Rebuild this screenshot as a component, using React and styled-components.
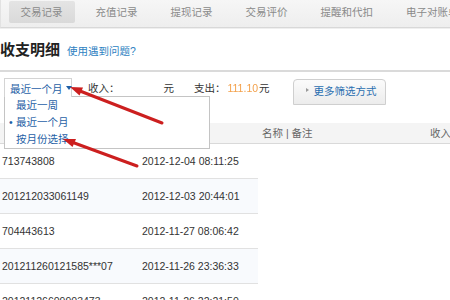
import React from "react";
import styled, { createGlobalStyle } from "styled-components";

const Global = createGlobalStyle`
  html, body { margin: 0; padding: 0; background: #fff; }
  body { width: 450px; height: 300px; overflow: hidden; }
  * { box-sizing: border-box; }
`;

const FONT = `"Liberation Sans", "Noto Sans CJK SC", sans-serif`;

const Page = styled.div`
  position: relative;
  width: 450px;
  height: 300px;
  overflow: hidden;
  font-family: ${FONT};
  background: #fff;
`;

const TabBar = styled.div`
  display: flex;
  align-items: flex-start;
  height: 28px;
  padding: 1px 0 0 3px;
  background: linear-gradient(#f6f6f6, #eeeeee);
  border-left: 1px solid #e2e2e2;
  border-bottom: 1px solid #d8d8d8;
  box-shadow: 0 1px 0 #efefef;
  white-space: nowrap;
  overflow: hidden;
`;

const Tab = styled.div`
  flex: none;
  height: 22px;
  margin: 0 4.5px;
  padding: 0 12px;
  line-height: 22px;
  font-size: 10.5px;
  color: #8a8a8a;
  border-radius: 2px;
  background: ${(p) => (p.$active ? "linear-gradient(#e4e4e4, #d9d9d9)" : "transparent")};
`;

const TitleRow = styled.div`
  display: flex;
  align-items: baseline;
  gap: 7px;
  height: 42px;
  padding-top: 10px;
`;

const Title = styled.div`
  font-size: 15px;
  font-weight: bold;
  color: #222;
`;

const HelpLink = styled.a`
  font-size: 10.5px;
  color: #2d7fc1;
  text-decoration: none;
`;

const FilterBar = styled.div`
  display: flex;
  align-items: flex-start;
  border-top: 2px solid #dadada;
  padding: 6px 0 20px 4px;
  height: 53px;
  white-space: nowrap;
`;

const DropWrap = styled.div`
  position: relative;
  flex: none;
  z-index: 5;
`;

const Trigger = styled.div`
  position: relative;
  z-index: 2;
  display: flex;
  align-items: center;
  gap: 2px;
  height: 19px;
  width: 68px;
  padding-left: 5px;
  font-size: 10.5px;
  color: #1f5fa6;
  background: #fff;
  border: 1px solid #d4d4d4;
  border-bottom: none;
`;

const Caret = styled.span`
  width: 0;
  height: 0;
  margin-left: 1px;
  border-left: 3px solid transparent;
  border-right: 3px solid transparent;
  border-top: 4px solid #1f5fa6;
`;

const Panel = styled.div`
  position: absolute;
  top: 18px;
  left: 0;
  width: 206px;
  height: 53px;
  background: #fff;
  border: 1px solid #c4c4c4;
  padding: 0 0 0 11px;
`;

const Option = styled.div`
  position: relative;
  height: 17px;
  line-height: 17px;
  font-size: 10.5px;
  color: #1f5fa6;
  &::before {
    content: ${(p) => (p.$selected ? '"•"' : '""')};
    position: absolute;
    left: -7px;
    top: 0;
    color: #1f5fa6;
  }
`;

const Label = styled.span`
  flex: none;
  margin-left: ${(p) => p.$gap || 0}px;
  line-height: 20px;
  font-size: 10.5px;
  color: #333;
`;

const Spacer = styled.span`
  flex: none;
  width: ${(p) => p.$w}px;
  height: 20px;
`;

const Amount = styled.span`
  flex: none;
  margin-left: 2px;
  line-height: 20px;
  font-size: 10.5px;
  color: #f3a04a;
  filter: blur(0.7px);
`;

const MoreButton = styled.div`
  flex: none;
  display: flex;
  align-items: center;
  gap: 5px;
  margin-left: 23px;
  margin-top: 1px;
  height: 26px;
  width: 93px;
  padding: 0 0 4px 12px;
  border: 1px solid #cfcfcf;
  border-radius: 4px 4px 0 0;
  background: linear-gradient(#fbfbfb, #ececec);
  font-size: 10.5px;
  color: #2a6fb0;
`;

const SmallTri = styled.span`
  width: 0;
  height: 0;
  border-top: 2.5px solid transparent;
  border-bottom: 2.5px solid transparent;
  border-left: 3px solid #999;
`;

const TableHead = styled.div`
  display: grid;
  grid-template-columns: 260px 168px 1fr;
  align-items: center;
  height: 21px;
  padding: 0 0 2px 2px;
  background: #f4f4f4;
  border-bottom: 1px solid #d9d9d9;
  font-size: 10.5px;
  color: #666;
  white-space: nowrap;
`;

const Rows = styled.div`
  width: 258px;
`;

const Row = styled.div`
  display: grid;
  grid-template-columns: 140px 1fr;
  align-items: center;
  height: 35px;
  padding-left: 2px;
  background: ${(p) => (p.$alt ? "#f8fafd" : "#fff")};
  border-bottom: 1px solid #e1e1e1;
  font-size: 10.5px;
  color: #333;
  white-space: nowrap;
`;

const Overlay = styled.svg`
  position: absolute;
  left: 0;
  top: 0;
  z-index: 10;
  pointer-events: none;
`;

const tabs = ["交易记录", "充值记录", "提现记录", "交易评价", "提醒和代扣", "电子对账单"];

const rows = [
  ["713743808", "2012-12-04 08:11:25"],
  ["201212033061149", "2012-12-03 20:44:01"],
  ["704443613", "2012-11-27 08:06:42"],
  ["201211260121585***07", "2012-11-26 23:36:33"],
  ["20121126609903473", "2012-11-26 22:21:50"],
];

export default function App() {
  return (
    <Page>
      <Global />
      <TabBar>
        {tabs.map((t, i) => (
          <Tab key={t} $active={i === 0}>
            {t}
          </Tab>
        ))}
      </TabBar>
      <TitleRow>
        <Title>收支明细</Title>
        <HelpLink href="#">使用遇到问题?</HelpLink>
      </TitleRow>
      <FilterBar>
        <DropWrap>
          <Trigger>
            最近一个月
            <Caret />
          </Trigger>
          <Panel>
            <Option>最近一周</Option>
            <Option $selected>最近一个月</Option>
            <Option>按月份选择</Option>
          </Panel>
        </DropWrap>
        <Label $gap={16}>收入：</Label>
        <Spacer $w={44} />
        <Label>元</Label>
        <Label $gap={20}>支出：</Label>
        <Amount>111.10</Amount>
        <Label $gap={1}>元</Label>
        <MoreButton>
          <SmallTri />
          更多筛选方式
        </MoreButton>
      </FilterBar>
      <TableHead>
        <span />
        <span>名称 | 备注</span>
        <span>收入</span>
      </TableHead>
      <Rows>
        {rows.map((r, i) => (
          <Row key={r[0]} $alt={i % 2 === 1}>
            <span>{r[0]}</span>
            <span>{r[1]}</span>
          </Row>
        ))}
      </Rows>
      <Overlay width="450" height="300" viewBox="0 0 450 300">
        <line x1="162" y1="123" x2="80" y2="91" stroke="#cc1f1f" strokeWidth="3" strokeLinecap="round" />
        <polygon points="70,87 83,87.5 79.5,95.5" fill="#cc1f1f" />
        <line x1="137" y1="166" x2="73" y2="142.5" stroke="#cc1f1f" strokeWidth="3" strokeLinecap="round" />
        <polygon points="63,139 76,139 72.5,147" fill="#cc1f1f" />
      </Overlay>
    </Page>
  );
}
